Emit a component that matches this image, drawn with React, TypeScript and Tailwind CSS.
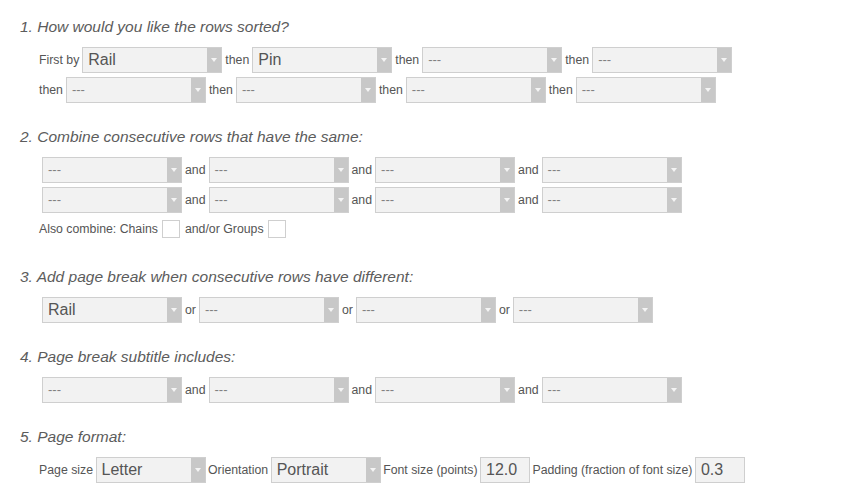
import type { ReactNode } from 'react'

function Arrow() {
  return (
    <span className="flex h-full w-[14px] shrink-0 items-center justify-center bg-[#c8c8c8]">
      <svg width="6" height="4" viewBox="0 0 6 4">
        <path d="M0 0 L6 0 L3 4 Z" fill="#f4f4f4" />
      </svg>
    </span>
  )
}

function Select({ value, width = 'w-[140px]' }: { value?: string; width?: string }) {
  return (
    <div className={`flex h-[26px] ${width} shrink-0 items-stretch border border-[#cfcfcf] bg-[#f2f2f2]`}>
      <span
        className={`flex flex-1 items-center pl-[5px] ${
          value ? 'text-[16px] text-[#555]' : 'text-[13px] text-[#808080]'
        }`}
      >
        {value ?? '---'}
      </span>
      <Arrow />
    </div>
  )
}

function Label({ children }: { children: ReactNode }) {
  return <span className="text-[12.3px] text-[#555]">{children}</span>
}

function Row({
  children,
  indent = 'pl-[39px]',
  gap = 'gap-[3px]',
}: {
  children: ReactNode
  indent?: string
  gap?: string
}) {
  return <div className={`flex items-center ${gap} ${indent}`}>{children}</div>
}

function Heading({ children }: { children: ReactNode }) {
  return <h2 className="h-5 pl-[20px] text-[15.5px] leading-5 italic text-[#5c5c5c]">{children}</h2>
}

function Checkbox() {
  return <span className="h-[18px] w-[18px] border border-[#cfcfcf] bg-white" />
}

function Input({ value }: { value: string }) {
  return (
    <div className="flex h-[26px] w-[50px] items-center border border-[#cfcfcf] bg-[#f2f2f2] pl-[5px] text-[16px] text-[#555]">
      {value}
    </div>
  )
}

export default function App() {
  return (
    <div
      className="h-[487px] w-[853px] overflow-hidden bg-white pt-[17px]"
      style={{ fontFamily: '"Liberation Sans", Arial, sans-serif' }}
    >
      <section>
        <Heading>1. How would you like the rows sorted?</Heading>
        <div className="mt-[10px] flex flex-col gap-[4px]">
          <Row>
            <Label>First by</Label>
            <Select value="Rail" />
            <Label>then</Label>
            <Select value="Pin" />
            <Label>then</Label>
            <Select />
            <Label>then</Label>
            <Select />
          </Row>
          <Row>
            <Label>then</Label>
            <Select />
            <Label>then</Label>
            <Select />
            <Label>then</Label>
            <Select />
            <Label>then</Label>
            <Select />
          </Row>
        </div>
      </section>

      <section className="mt-[24px]">
        <Heading>2. Combine consecutive rows that have the same:</Heading>
        <div className="mt-[10px] flex flex-col gap-[4px]">
          {[0, 1].map((row) => (
            <Row key={row} indent="pl-[42px]">
              <Select />
              <Label>and</Label>
              <Select />
              <Label>and</Label>
              <Select />
              <Label>and</Label>
              <Select />
            </Row>
          ))}
        </div>
        <div className="mt-[6px] flex h-5 items-center pl-[39px] text-[12.3px] text-[#555]">
          <span className="mr-[4px]">Also combine: Chains</span>
          <Checkbox />
          <span className="mr-[4px] ml-[5px]">and/or Groups</span>
          <Checkbox />
        </div>
      </section>

      <section className="mt-[28px]">
        <Heading>3. Add page break when consecutive rows have different:</Heading>
        <div className="mt-[10px]">
          <Row indent="pl-[42px]">
            <Select value="Rail" />
            <Label>or</Label>
            <Select />
            <Label>or</Label>
            <Select />
            <Label>or</Label>
            <Select />
          </Row>
        </div>
      </section>

      <section className="mt-[24px]">
        <Heading>4. Page break subtitle includes:</Heading>
        <div className="mt-[10px]">
          <Row indent="pl-[42px]">
            <Select />
            <Label>and</Label>
            <Select />
            <Label>and</Label>
            <Select />
            <Label>and</Label>
            <Select />
          </Row>
        </div>
      </section>

      <section className="mt-[24px]">
        <Heading>5. Page format:</Heading>
        <div className="mt-[10px]">
          <Row gap="gap-[2.5px]">
            <Label>Page size</Label>
            <Select value="Letter" width="w-[110px]" />
            <Label>Orientation</Label>
            <Select value="Portrait" width="w-[110px]" />
            <Label>Font size (points)</Label>
            <Input value="12.0" />
            <Label>Padding (fraction of font size)</Label>
            <Input value="0.3" />
          </Row>
        </div>
      </section>
    </div>
  )
}
